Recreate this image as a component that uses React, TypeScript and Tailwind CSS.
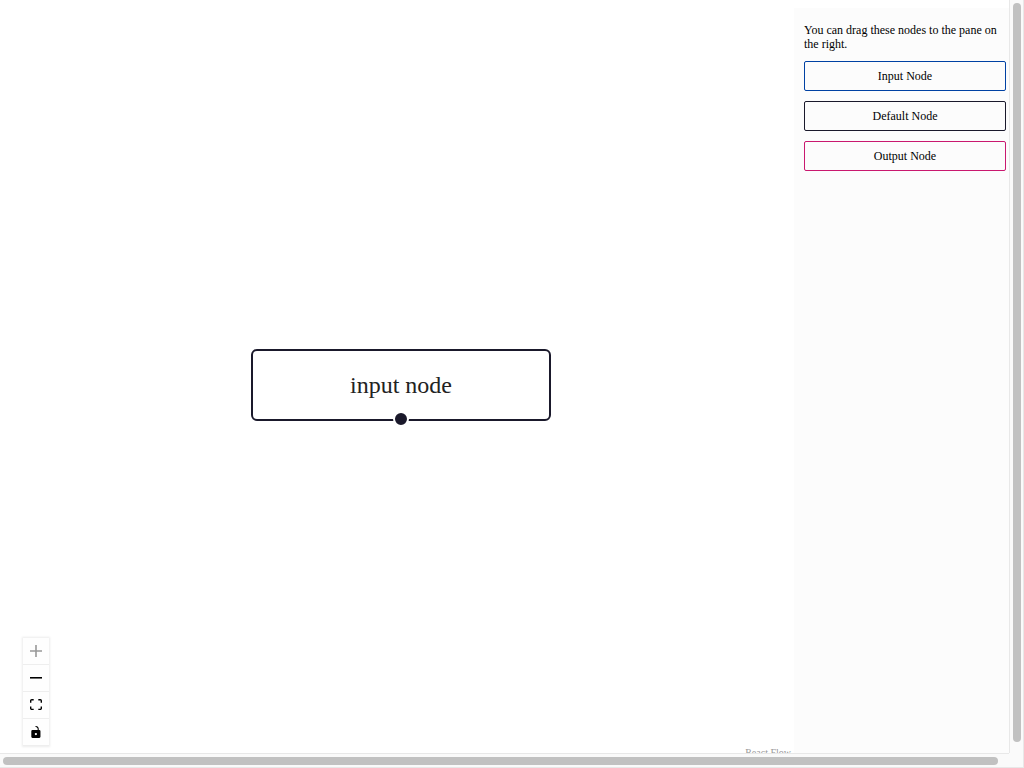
import type { ReactNode } from 'react';

const paletteNodes = [
  { label: 'Input Node', border: 'border-[#0041a3]' },
  { label: 'Default Node', border: 'border-[#1a192b]' },
  { label: 'Output Node', border: 'border-[#c9186f]' },
];

function ControlButton({
  label,
  viewBox,
  path,
  disabled = false,
}: {
  label: string;
  viewBox: string;
  path: string;
  disabled?: boolean;
}) {
  return (
    <button
      type="button"
      aria-label={label}
      disabled={disabled}
      className="flex h-[27px] w-[26px] items-center justify-center border-b border-[#eeeeee] bg-[#fefefe] text-black disabled:text-black/40"
    >
      <svg viewBox={viewBox} className="max-h-3 w-full max-w-3 fill-current">
        <path d={path} />
      </svg>
    </button>
  );
}

function Controls() {
  return (
    <div className="absolute bottom-[15px] left-[15px] flex flex-col shadow-[0_0_2px_1px_rgba(0,0,0,0.08)]">
      <ControlButton
        label="zoom in"
        disabled
        viewBox="0 0 32 32"
        path="M32 18.133H18.133V32h-4.266V18.133H0v-4.266h13.867V0h4.266v13.867H32z"
      />
      <ControlButton label="zoom out" viewBox="0 0 32 5" path="M0 0h32v4.2H0z" />
      <ControlButton
        label="fit view"
        viewBox="0 0 32 30"
        path="M3.692 4.63c0-.53.4-.938.939-.938h5.215V0H4.708C2.13 0 0 2.054 0 4.63v5.216h3.692V4.631zM27.354 0h-5.2v3.692h5.17c.53 0 .984.4.984.939v5.215H32V4.631A4.624 4.624 0 0027.354 0zm.954 24.83c0 .532-.4.94-.939.94h-5.215v3.768h5.215c2.577 0 4.631-2.13 4.631-4.707v-5.139h-3.692v5.139zm-23.677.94c-.531 0-.939-.4-.939-.94v-5.138H0v5.139c0 2.577 2.13 4.707 4.708 4.707h5.138V25.77H4.631z"
      />
      <ControlButton
        label="toggle interactivity"
        viewBox="0 0 25 32"
        path="M21.333 10.667H19.81V7.619C19.81 3.429 16.38 0 12.19 0c-4.114 1.828-1.37 2.133.305 2.438 1.676.305 4.42 2.59 4.42 5.181v3.048H3.047A3.056 3.056 0 000 13.714v15.238A3.056 3.056 0 003.048 32h18.285a3.056 3.056 0 003.048-3.048V13.714a3.056 3.056 0 00-3.048-3.047zM12.19 24.533a3.056 3.056 0 01-3.047-3.047 3.056 3.056 0 013.047-3.048 3.056 3.056 0 013.048 3.048 3.056 3.056 0 01-3.048 3.047z"
      />
    </div>
  );
}

function FlowNode({ children }: { children: ReactNode }) {
  return (
    <div className="relative flex h-[72px] w-[300px] items-center justify-center rounded-md border-2 border-[#1a192b] bg-white text-2xl text-[#222222]">
      {children}
      <span className="absolute -bottom-2 left-1/2 size-4 -translate-x-1/2 rounded-full border-2 border-white bg-[#1a192b]" />
    </div>
  );
}

export default function App() {
  return (
    <div className="grid h-screen grid-cols-[minmax(0,1fr)_15px] grid-rows-[minmax(0,1fr)_15px] bg-[#fafafa] font-['Liberation_Serif',serif] text-black">
      <div className="flex overflow-hidden bg-white pt-2 pl-2">
        <main className="relative -mb-2 flex flex-1 items-center justify-center">
          <FlowNode>input node</FlowNode>
          <Controls />
          <a
            href="https://reactflow.dev"
            className="absolute right-0 bottom-0 px-[3px] py-[2px] text-[10px] leading-3 text-[#999999]"
          >
            React Flow
          </a>
        </main>
        <aside className="flex w-[215px] flex-col gap-2.5 bg-[#fcfcfc] pt-[15px] pr-[3px] pl-2.5 text-xs">
          <p className="leading-[14px]">You can drag these nodes to the pane on the right.</p>
          {paletteNodes.map(({ label, border }) => (
            <div
              key={label}
              draggable
              className={`flex h-[30px] cursor-grab items-center justify-center rounded-[2px] border ${border}`}
            >
              {label}
            </div>
          ))}
        </aside>
      </div>
      <div className="flex justify-center border-x border-[#e8e8e8] pt-[3px] pb-[11px]">
        <div className="w-2 rounded-full bg-[#c1c1c1]" />
      </div>
      <div className="flex items-stretch border-y border-[#e8e8e8] py-[3px] pr-[11px] pl-[3px]">
        <div className="h-2 flex-1 rounded-full bg-[#c1c1c1]" />
      </div>
      <div className="border-r border-b border-[#e8e8e8]" />
    </div>
  );
}
